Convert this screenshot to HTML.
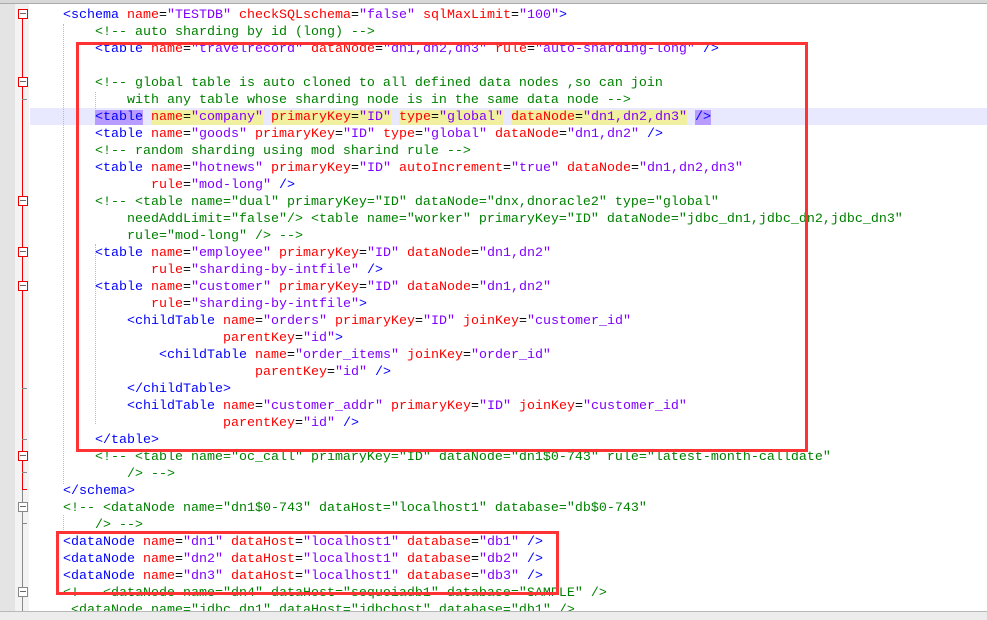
<!DOCTYPE html>
<html><head><meta charset="utf-8"><style>
html,body{margin:0;padding:0;width:987px;height:620px;overflow:hidden;background:#fff;position:relative}
#m1{position:absolute;left:0;top:0;width:15px;height:620px;background:#e4e4e4}
#m2{position:absolute;left:15px;top:0;width:14px;height:620px;background:#f3f3f3}
#top{position:absolute;left:0;top:0;width:987px;height:3px;background:#d8d8d8;border-bottom:1px solid #aaa}
#bot{position:absolute;left:0;top:611px;width:987px;height:9px;background:#ececec;border-top:1px solid #b8b8b8}
.fl{position:absolute;left:22px;width:1px}
.fb{position:absolute;left:18px;width:8px;height:8px;border:1px solid #e00;background:#fff}
.fb:after{content:"";position:absolute;left:1px;top:3px;width:6px;height:1px;background:#666}
.fb.g{border-color:#888}
.tk{position:absolute;left:22px;width:5px;height:1px;background:#888}
.ig{position:absolute;width:0;border-left:1px dotted #bbb}
pre{position:absolute;left:63px;top:7px;margin:0;font:13.33px/17px "Liberation Mono",monospace;color:#000;white-space:pre}
.t{color:#0000ff}.a{color:#ff0000}.v{color:#8000ff}.c{color:#008000}
#hl{position:absolute;left:30px;top:108px;width:957px;height:17px;background:#e8e8ff}
.box{position:absolute;border:3px solid #f33}
.y{background:#f0f0a0}.p{background:#b99cff}
</style></head><body>
<div id="m1"></div><div id="m2"></div><div id="hl"></div>
<div class="ig" style="left:63px;top:24px;height:460px"></div>
<div class="ig" style="left:95px;top:92px;height:17px"></div>
<div class="ig" style="left:95px;top:244px;height:180px"></div>
<div class="ig" style="left:63px;top:515px;height:17px"></div>
<div class="fl" style="top:14px;height:475px;background:#e00"></div>
<div class="fl" style="top:489px;height:125px;background:#888"></div>
<div class="fb" style="top:9px"></div>
<div class="fb" style="top:77px"></div>
<div class="fb" style="top:196px"></div>
<div class="fb" style="top:247px"></div>
<div class="fb" style="top:281px"></div>
<div class="fb" style="top:451px"></div>
<div class="fb g" style="top:502px"></div>
<div class="fb g" style="top:587px"></div>
<div class="tk" style="top:99px"></div><div class="tk" style="top:388px"></div><div class="tk" style="top:439px"></div><div class="tk" style="top:472px"></div><div class="tk" style="top:489px;background:#e00"></div><div class="tk" style="top:523px"></div>
<pre><span class="t">&lt;schema</span> <span class="a">name</span>=<span class="v">"TESTDB"</span> <span class="a">checkSQLschema</span>=<span class="v">"false"</span> <span class="a">sqlMaxLimit</span>=<span class="v">"100"</span><span class="t">&gt;</span>
<span class="c">    &lt;!-- auto sharding by id (long) --&gt;</span>
    <span class="t">&lt;table</span> <span class="a">name</span>=<span class="v">"travelrecord"</span> <span class="a">dataNode</span>=<span class="v">"dn1,dn2,dn3"</span> <span class="a">rule</span>=<span class="v">"auto-sharding-long"</span> <span class="t">/&gt;</span>

<span class="c">    &lt;!-- global table is auto cloned to all defined data nodes ,so can join
        with any table whose sharding node is in the same data node --&gt;</span>
    <span class="t p">&lt;table</span> <span class="y"><span class="a">name</span>=<span class="v">"company"</span></span> <span class="y"><span class="a">primaryKey</span>=<span class="v">"ID"</span></span> <span class="y"><span class="a">type</span>=<span class="v">"global"</span></span> <span class="y"><span class="a">dataNode</span>=<span class="v">"dn1,dn2,dn3"</span></span> <span class="t p">/&gt;</span>
    <span class="t">&lt;table</span> <span class="a">name</span>=<span class="v">"goods"</span> <span class="a">primaryKey</span>=<span class="v">"ID"</span> <span class="a">type</span>=<span class="v">"global"</span> <span class="a">dataNode</span>=<span class="v">"dn1,dn2"</span> <span class="t">/&gt;</span>
<span class="c">    &lt;!-- random sharding using mod sharind rule --&gt;</span>
    <span class="t">&lt;table</span> <span class="a">name</span>=<span class="v">"hotnews"</span> <span class="a">primaryKey</span>=<span class="v">"ID"</span> <span class="a">autoIncrement</span>=<span class="v">"true"</span> <span class="a">dataNode</span>=<span class="v">"dn1,dn2,dn3"</span>
           <span class="a">rule</span>=<span class="v">"mod-long"</span> <span class="t">/&gt;</span>
<span class="c">    &lt;!-- &lt;table name="dual" primaryKey="ID" dataNode="dnx,dnoracle2" type="global"
        needAddLimit="false"/&gt; &lt;table name="worker" primaryKey="ID" dataNode="jdbc_dn1,jdbc_dn2,jdbc_dn3"
        rule="mod-long" /&gt; --&gt;</span>
    <span class="t">&lt;table</span> <span class="a">name</span>=<span class="v">"employee"</span> <span class="a">primaryKey</span>=<span class="v">"ID"</span> <span class="a">dataNode</span>=<span class="v">"dn1,dn2"</span>
           <span class="a">rule</span>=<span class="v">"sharding-by-intfile"</span> <span class="t">/&gt;</span>
    <span class="t">&lt;table</span> <span class="a">name</span>=<span class="v">"customer"</span> <span class="a">primaryKey</span>=<span class="v">"ID"</span> <span class="a">dataNode</span>=<span class="v">"dn1,dn2"</span>
           <span class="a">rule</span>=<span class="v">"sharding-by-intfile"</span><span class="t">&gt;</span>
        <span class="t">&lt;childTable</span> <span class="a">name</span>=<span class="v">"orders"</span> <span class="a">primaryKey</span>=<span class="v">"ID"</span> <span class="a">joinKey</span>=<span class="v">"customer_id"</span>
                    <span class="a">parentKey</span>=<span class="v">"id"</span><span class="t">&gt;</span>
            <span class="t">&lt;childTable</span> <span class="a">name</span>=<span class="v">"order_items"</span> <span class="a">joinKey</span>=<span class="v">"order_id"</span>
                        <span class="a">parentKey</span>=<span class="v">"id"</span> <span class="t">/&gt;</span>
        <span class="t">&lt;/childTable&gt;</span>
        <span class="t">&lt;childTable</span> <span class="a">name</span>=<span class="v">"customer_addr"</span> <span class="a">primaryKey</span>=<span class="v">"ID"</span> <span class="a">joinKey</span>=<span class="v">"customer_id"</span>
                    <span class="a">parentKey</span>=<span class="v">"id"</span> <span class="t">/&gt;</span>
    <span class="t">&lt;/table&gt;</span>
<span class="c">    &lt;!-- &lt;table name="oc_call" primaryKey="ID" dataNode="dn1$0-743" rule="latest-month-calldate"
        /&gt; --&gt;</span>
<span class="t">&lt;/schema&gt;</span>
<span class="c">&lt;!-- &lt;dataNode name="dn1$0-743" dataHost="localhost1" database="db$0-743"
    /&gt; --&gt;</span>
<span class="t">&lt;dataNode</span> <span class="a">name</span>=<span class="v">"dn1"</span> <span class="a">dataHost</span>=<span class="v">"localhost1"</span> <span class="a">database</span>=<span class="v">"db1"</span> <span class="t">/&gt;</span>
<span class="t">&lt;dataNode</span> <span class="a">name</span>=<span class="v">"dn2"</span> <span class="a">dataHost</span>=<span class="v">"localhost1"</span> <span class="a">database</span>=<span class="v">"db2"</span> <span class="t">/&gt;</span>
<span class="t">&lt;dataNode</span> <span class="a">name</span>=<span class="v">"dn3"</span> <span class="a">dataHost</span>=<span class="v">"localhost1"</span> <span class="a">database</span>=<span class="v">"db3"</span> <span class="t">/&gt;</span>
<span class="c">&lt;!-- &lt;dataNode name="dn4" dataHost="sequoiadb1" database="SAMPLE" /&gt;</span>
<span class="c"> &lt;dataNode name="jdbc_dn1" dataHost="jdbchost" database="db1" /&gt;</span></pre>
<div class="box" style="left:76px;top:42px;width:726px;height:404px"></div>
<div class="box" style="left:56px;top:531px;width:497px;height:58px"></div>
<div id="top"></div><div id="bot"></div>
</body></html>
